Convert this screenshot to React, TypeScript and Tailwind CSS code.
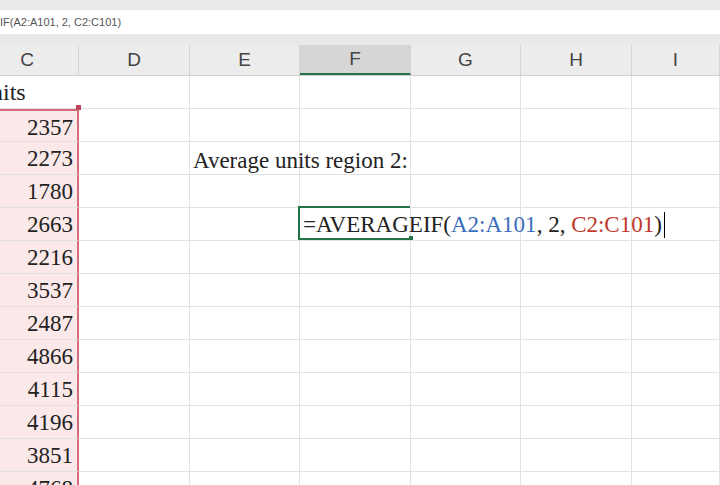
import React from "react";

const cols = [
  { l: "C", w: 79 },
  { l: "D", w: 111 },
  { l: "E", w: 110 },
  { l: "F", w: 111 },
  { l: "G", w: 110 },
  { l: "H", w: 111 },
  { l: "I", w: 88 },
];
const nums = ["2357", "2273", "1780", "2663", "2216", "3537", "2487", "4866", "4115", "4196", "3851", "4768"];

export default function App() {
  const serif = { fontFamily: "'Liberation Serif', serif" };
  return (
    <div className="w-[720px] h-[485px] overflow-hidden bg-white relative" style={{ fontFamily: "'Liberation Sans', sans-serif" }}>
      <div className="h-[10px] bg-[#e9e9e9]" />
      <div className="h-[24px] bg-white flex items-center text-[11px] text-[#555] pl-0">IF(A2:A101, 2, C2:C101)</div>
      <div className="h-[11px] bg-[#e9e9e9]" />
      <div className="flex h-[31px] bg-[#ececec] border-b border-[#cfcfcf]">
        {cols.map((c) => (
          <div
            key={c.l}
            style={{ width: c.w }}
            className={`shrink-0 flex items-center justify-center text-[19px] text-[#444] border-r border-[#d4d4d4] ${c.l === "F" ? "bg-[#d6d6d6] border-b-2 border-b-[#217346]" : ""} ${c.l === "C" ? "pr-6" : ""}`}
          >
            {c.l}
          </div>
        ))}
      </div>
      <div className="flex h-[33px]">
        {cols.map((c, j) => (
          <div key={c.l} style={{ width: c.w, ...serif }} className={`shrink-0 border-b border-[#e1e1e1] overflow-hidden ${j === 0 ? "" : "border-r"}`}>
            {j === 0 ? <span className="block ml-[-21px] text-[24px] leading-[33px] text-[#222]">units</span> : ""}
          </div>
        ))}
      </div>
      {nums.map((r, i) => (
        <div key={i} className="flex h-[33px]">
          {cols.map((c, j) => (
            <div
              key={c.l}
              style={{ width: c.w, ...serif }}
              className={`shrink-0 border-b border-[#e1e1e1] ${j === 0 ? "bg-[#fbe9e9] border-r-2 border-r-[#d36b7a] text-right pr-[4px] text-[23px] text-[#222] leading-[33px]" : "border-r border-[#e1e1e1]"} ${j === 0 && i === 0 ? "border-t-2 border-t-[#d36b7a]" : ""}`}
            >
              {j === 0 ? r : ""}
            </div>
          ))}
        </div>
      ))}
      <div className="absolute left-[76px] top-[105px] w-[5px] h-[5px] bg-[#c0455a]" />
      <div className="absolute left-[193px] top-[144px] text-[23px] text-[#222]" style={serif}>Average units region 2:</div>
      <div className="absolute left-[298px] top-[206px] w-[112px] h-[34px] border-2 border-[#217346] border-r-0" />
      <div className="absolute left-[409px] top-[236px] w-[4px] h-[4px] bg-[#217346]" />
      <div className="absolute left-[303px] top-[208px] text-[23px] text-[#222] flex items-center whitespace-pre" style={serif}>
        <span>=AVERAGEIF(</span>
        <span className="text-[#3b6dbd]">A2:A101</span>
        <span>, 2, </span>
        <span className="text-[#c0392b]">C2:C101</span>
        <span>)</span>
        <span className="inline-block w-[1px] h-[26px] bg-black ml-[2px]" />
      </div>
    </div>
  );
}
